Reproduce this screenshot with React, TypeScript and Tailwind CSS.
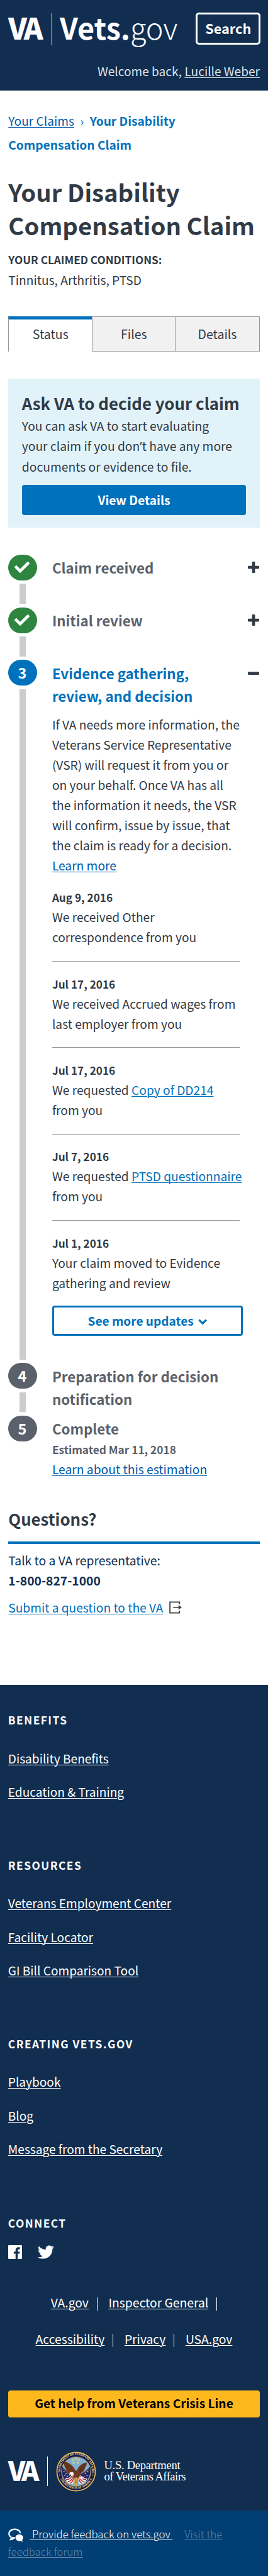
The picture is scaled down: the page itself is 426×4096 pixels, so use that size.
import type { ReactNode } from "react";
import { FaCheck, FaTwitter } from "react-icons/fa";

const link = "underline decoration-1 underline-offset-[2px]";

function Header() {
  return (
    <header className="h-[144px] bg-[#112e51] px-[13px] pt-[17px] text-white">
      <div className="flex h-[70px] items-start">
        <div className="w-[69px] text-[46.7px] font-black leading-[52px] tracking-[-4.3px]">VA</div>
        <div className="mt-[4px] h-[51px] w-px bg-white" />
        <div className="ml-[12px] whitespace-nowrap text-[46.7px] leading-[52px]">
          <span className="font-bold">Vets</span>
          <span className="font-bold">.</span>
          <span className="font-light">gov</span>
        </div>
        <button className="ml-auto mr-[-1px] mt-[3px] h-[51px] w-[102.6px] rounded-[5px] border-[3px] border-white pb-[2px] text-[21.7px] font-bold leading-[40px]">
          Search
        </button>
      </div>
      <p className="mt-[10.4px] text-right text-[19.1px] leading-[32px] text-[#dfe3e8]">
        Welcome back, <a className={link}>Lucille Weber</a>
      </p>
    </header>
  );
}

function Tabs() {
  return (
    <nav className="mt-[42.2px] grid h-[56px] grid-cols-[133px_133px_1fr] text-center text-[19.5px] leading-[40px] text-[#323a45]">
      <div className="border-l border-t-[5px] border-l-[#979797] border-t-[#0071bc] pt-[3px]">Status</div>
      <div className="border border-[#979797] bg-[#f1f1f1] pt-[7px]">Files</div>
      <div className="border border-l-0 border-[#979797] bg-[#f1f1f1] pt-[7px]">Details</div>
    </nav>
  );
}

function AskAlert() {
  return (
    <section className="mt-[42.6px] h-[237px] bg-[#e1f3f8] px-[21.5px] pt-[22.3px] text-[#323a45]">
      <h2 className="whitespace-nowrap text-[25.8px] font-bold leading-[34px]">Ask VA to decide your claim</h2>
      <p className="mt-[2.3px] whitespace-nowrap text-[19.25px] leading-[32px]">
        You can ask VA to start evaluating
        <br />
        your claim if you don<span className="font-['Noto_Sans']">’</span>t have any more
        <br />
        documents or evidence to file.
      </p>
      <button className="mt-[13.4px] h-[48px] w-full rounded-[4px] bg-[#0071bc] text-[19.25px] font-bold leading-[32px] text-white">
        View Details
      </button>
    </section>
  );
}

function PlusIcon() {
  return (
    <svg viewBox="0 0 18 18" className="h-[18px] w-[18px] fill-[#323a45]">
      <rect x="0" y="6.7" width="18" height="4.7" rx="1.3" />
      <rect x="6.7" y="0" width="4.7" height="18" rx="1.3" />
    </svg>
  );
}

function MinusIcon() {
  return (
    <svg viewBox="0 0 18 18" className="h-[18px] w-[18px] fill-[#323a45]">
      <rect x="0" y="7.2" width="18" height="4.7" rx="1.3" />
    </svg>
  );
}

type StepProps = { badge: ReactNode; size: string; circle: string; icon?: ReactNode; last?: boolean; children: ReactNode };

function Step({ badge, size, circle, icon, last, children }: StepProps) {
  return (
    <li className={`flex ${size}`}>
      <div className="flex w-[45.4px] shrink-0 flex-col items-center">
        <div className={`flex h-[41px] w-full shrink-0 items-center justify-center rounded-full pr-px text-[23.5px] font-bold leading-none text-white ${circle}`}>
          {badge}
        </div>
        {!last && <div className="mb-[5.5px] mt-[5.5px] w-[10.6px] flex-1 bg-[#ccc]" />}
      </div>
      <div className="ml-[24.2px] w-[303.4px] shrink-0 whitespace-nowrap pt-[2.6px]">{children}</div>
      {icon && <div className="ml-auto mr-[0.5px] pt-[11.5px]">{icon}</div>}
    </li>
  );
}

function Update({ date, last, children }: { date: string; last?: boolean; children: ReactNode }) {
  return (
    <div className={`w-[298px] pt-[19.5px] ${last ? "" : "border-b border-[#979797] pb-[21.8px]"}`}>
      <h5 className="text-[17.2px] font-bold leading-[31px]">{date}</h5>
      <p className="text-[19.2px] leading-[32px]">{children}</p>
    </div>
  );
}

function Steps() {
  return (
    <ol className="mt-[42.7px] text-[#323a45]">
      <Step badge={<FaCheck className="h-[24px] w-[24px]" />} circle="bg-[#2e8540]" size="h-[83.9px]" icon={<PlusIcon />}>
        <h3 className="text-[22.3px] font-bold leading-[36.4px] text-[#5b616b]">Claim received</h3>
      </Step>
      <Step badge={<FaCheck className="h-[24px] w-[24px]" />} circle="bg-[#2e8540]" size="h-[83.9px]" icon={<PlusIcon />}>
        <h3 className="text-[22.3px] font-bold leading-[36.4px] text-[#5b616b]">Initial review</h3>
      </Step>
      <Step badge="3" circle="bg-[#0071bc]" size="h-[1117.6px]" icon={<MinusIcon />}>
        <h3 className="text-[22.3px] font-bold leading-[36.4px] text-[#0071bc]">
          Evidence gathering,
          <br />
          review, and decision
        </h3>
        <p className="mt-[11px] text-[19.2px] leading-[32px]">
          If VA needs more information, the
          <br />
          Veterans Service Representative
          <br />
          (VSR) will request it from you or
          <br />
          on your behalf. Once VA has all
          <br />
          the information it needs, the VSR
          <br />
          will confirm, issue by issue, that
          <br />
          the claim is ready for a decision.
          <br />
          <a className={`${link} text-[#0059a9]`}>Learn more</a>
        </p>
        <Update date="Aug 9, 2016">
          We received Other
          <br />
          correspondence from you
        </Update>
        <Update date="Jul 17, 2016">
          We received Accrued wages from
          <br />
          last employer from you
        </Update>
        <Update date="Jul 17, 2016">
          We requested <a className={`${link} text-[#0071bc]`}>Copy of DD214</a>
          <br />
          from you
        </Update>
        <Update date="Jul 7, 2016">
          We requested <a className={`${link} text-[#0071bc]`}>PTSD questionnaire</a>
          <br />
          from you
        </Update>
        <Update date="Jul 1, 2016" last>
          Your claim moved to Evidence
          <br />
          gathering and review
        </Update>
        <button className="mt-[20.8px] flex h-[48px] w-full items-center justify-center rounded-[4px] border-[3px] border-[#0071bc] text-[19.1px] font-bold text-[#0071bc]">
          See more updates
          <svg viewBox="0 0 14 10" className="ml-[7.5px] mt-[4px] h-[10px] w-[14.4px]">
            <path d="M1.2 1.6 7 7.3l5.8-5.7" fill="none" stroke="currentColor" strokeWidth="3.2" />
          </svg>
        </button>
      </Step>
      <Step badge="4" circle="bg-[#5b616b]" size="h-[83.8px]">
        <h3 className="text-[22.3px] font-bold leading-[36.4px] text-[#5b616b]">
          Preparation for decision
          <br />
          notification
        </h3>
      </Step>
      <Step badge="5" circle="bg-[#5b616b]" size="h-[100.6px]" last>
        <h3 className="text-[22.3px] font-bold leading-[36.4px] text-[#5b616b]">Complete</h3>
        <h5 className="text-[17.3px] font-bold leading-[29px] text-[#5b616b]">Estimated Mar 11, 2018</h5>
        <a className={`${link} mt-px block text-[19.25px] leading-[32px] text-[#0059a9]`}>Learn about this estimation</a>
      </Step>
    </ol>
  );
}

function Questions() {
  return (
    <section className="mt-[46.5px] text-[19.3px] leading-[32px] text-[#112e51]">
      <h2 className="mb-[10.4px] border-b-[4px] border-[#0071bc] pb-[18.7px] text-[25.8px] font-bold leading-[34px] text-[#323a45]">
        Questions?
      </h2>
      <p>Talk to a VA representative:</p>
      <p className="font-bold">1-800-827-1000</p>
      <p className="mt-[10.6px] flex items-center text-[19.15px]">
        <a className={`${link} text-[#0071bc]`}>Submit a question to the VA</a>
        <svg viewBox="0 0 20 20" className="ml-[10px] h-[20px] w-[20px]">
          <path d="M16.3 5V1.3H1.1v17.4h15.2V15" fill="none" stroke="#3d3a3a" strokeWidth="1.8" />
          <path d="M6.2 9.1h8.6V6l5.1 3.8-5.1 3.8v-3H6.2z" fill="#3d3a3a" />
        </svg>
      </p>
    </section>
  );
}

function FooterGroup({ title, size, links }: { title: string; size: string; links: string[] }) {
  return (
    <section className={size}>
      <h4 className="mb-[32.3px] text-[17.3px] font-bold leading-[24px] tracking-[1.5px]">{title}</h4>
      <ul className="space-y-[21.6px] text-[19.1px] leading-[32px]">
        {links.map((l) => (
          <li key={l}>
            <a className={link}>{l}</a>
          </li>
        ))}
      </ul>
    </section>
  );
}

function LinkRow({ links, trailing }: { links: string[]; trailing?: boolean }) {
  return (
    <div className="flex h-[57.7px] items-center justify-center gap-[17.5px]">
      {links.map((l, i) => (
        <span key={l} className="flex items-center">
          <a className={link}>{l}</a>
          {(trailing || i < links.length - 1) && <span className="ml-[13px] mt-[4px] h-[21px] w-px bg-white" />}
        </span>
      ))}
    </div>
  );
}

function Seal() {
  const stars: [number, number][] = [[47, 17], [40, 20], [54, 20], [42, 27], [52, 27]];
  return (
    <svg viewBox="0 0 96 96" className="h-[64px] w-[64px]">
      <defs>
        <path id="sealTop" d="M12.5 58a37.500 37.500 0 1 1 71 0" />
        <path id="sealBottom" d="M9 62a41.500 41.500 0 0 0 78 0" />
      </defs>
      <circle cx="48" cy="48" r="47.5" fill="#14163a" />
      <circle cx="48" cy="48" r="45.8" fill="#181b4a" stroke="#e3bd52" strokeWidth="2.6" />
      <circle cx="48" cy="48" r="35" fill="#7fb2d1" stroke="#e3bd52" strokeWidth="1" />
      <text className="fill-[#e8d58a] font-serif text-[7.6px] font-bold">
        <textPath href="#sealTop" startOffset="50%" textAnchor="middle">DEPARTMENT OF VETERANS AFFAIRS</textPath>
      </text>
      <text className="fill-[#e8d58a] font-serif text-[7.3px] font-bold">
        <textPath href="#sealBottom" startOffset="50%" textAnchor="middle">UNITED STATES OF AMERICA</textPath>
      </text>
      <circle cx="8.3" cy="56" r="1.3" fill="#e8d58a" />
      <circle cx="87.7" cy="56" r="1.3" fill="#e8d58a" />
      {stars.map(([x, y]) => (
        <path key={`${x}-${y}`} transform={`translate(${x} ${y})`} d="M0-3.200 1-1h2.300L1.500.500 2.200 2.800 0 1.500-2.200 2.800-1.500.500-3.300-1H-1z" fill="#f0d668" />
      ))}
      <path d="M15 36c7 9 14 14 23 18l-5 16-10 1c-6-8-11-20-8-35z" fill="#23275f" />
      <path d="M81 36c-7 9-14 14-23 18l5 16 10 1c6-8 11-20 8-35z" fill="#23275f" />
      <path d="M17 42l14 12M79 42 65 54" stroke="#b9862f" strokeWidth="1.2" />
      <g fill="#e6e8f2">
        {[[19, 48], [24, 53], [21, 57], [28, 59], [25, 64], [76, 48], [71, 53], [74, 58], [67, 60], [70, 65]].map(([x, y]) => (
          <circle key={`${x}-${y}`} cx={x} cy={y} r="1.3" />
        ))}
      </g>
      <path d="M21 64c9 2 14-4 17-10l7 8-5 16c-8 0-15-5-19-14zM75 64c-9 2-14-4-17-10l-7 8 5 16c8 0 15-5 19-14z" fill="#eef0f4" />
      <path d="M24 67c8 1 12-4 15-10M28 72c7 0 10-6 13-12M34 76c5-2 7-8 8-13M72 67c-8 1-12-4-15-10M68 72c-7 0-10-6-13-12M62 76c-5-2-7-8-8-13" fill="none" stroke="#b92b36" strokeWidth="2.2" />
      <path d="M20 24c8 2 19 6 26 20l3 3c3-10 12-19 24-21 1 5-1 10-4 14-1 6-5 9-9 11-2 6-5 11-9 15l-8-2-5-9c-9-2-15-8-14-13-4-5-6-12-4-18z" fill="#6d3b22" />
      <path d="M22 28c8 4 14 9 18 18M24 36c6 3 10 7 13 12M71 29c-7 4-12 10-15 18M68 38c-5 3-8 7-10 12" fill="none" stroke="#3e2013" strokeWidth="1.2" />
      <path d="M32 52c2-4 6-4 9-2l2 7-6 1-2-2-3 1z" fill="#f7f5ef" />
      <path d="M32 53l4 1-3 2z" fill="#e3ae35" />
      <path d="M44 63l5-1 4 2-1 14-4 4-4-4z" fill="#d9a93a" />
      <path d="M46 64v13M50 65v12" stroke="#b92b36" strokeWidth="1" />
      <path d="M54 63c5-4 10-3 13-1l-6 4z" fill="#f3f3ee" />
    </svg>
  );
}

function FeedbackBar() {
  return (
    <div className="flex-1 bg-[#003e73] px-[12.8px] pt-[22.7px] text-[16.8px] font-light leading-[28px]">
      <div className="flex items-start">
        <svg viewBox="0 0 36 34" className="mt-[5px] h-[22.6px] w-[24px]" preserveAspectRatio="none">
          <path
            fillRule="evenodd"
            d="M15.500.800C7 .800.300 6 .300 13c0 4 2.200 7.400 5.700 9.600-.4 2.600-1.800 4.500-3.800 6.400 4.300.6 8.500-.9 11.600-3.900l2.600-.1.300-3.700c-2 .2-4.500 0-6.300-.5l-2.400 1.800c.1-1 .2-2 0-2.900C5 18 3.600 15.700 3.600 13c0-4.900 5.300-8.600 11.900-8.600 6 0 11 3 11.800 7.400l3.500.7C30.500 5.800 23.800.800 15.500.800z"
            fill="#fff"
          />
          <path d="M26.500 14.500c-5.200 0-9.200 3.600-9.200 8.200s4 8.200 9.200 8.200c.9 0 1.800-.1 2.600-.3 1.800 1.300 3.700 1.800 6 1.700-1-1.200-1.600-2.500-1.800-4 1.500-1.400 2.400-3.400 2.400-5.600 0-4.600-4-8.200-9.200-8.200z" fill="#fff" />
        </svg>
        <a className={`${link} ml-[10.5px] whitespace-pre`}>{"\u00a0Provide feedback on vets.gov\u00a0"}</a>
        <a className={`${link} ml-[19px] whitespace-nowrap text-[#5f87ab]`}>Visit the</a>
      </div>
      <a className={`${link} text-[#5f87ab]`}>feedback forum</a>
    </div>
  );
}

function Footer() {
  return (
    <footer className="flex h-[1417.3px] flex-col bg-[#112e51] text-white">
      <div className="h-[1313.4px] shrink-0 px-[12.8px] pt-[44.8px]">
        <FooterGroup title="BENEFITS" size="h-[230.4px]" links={["Disability Benefits", "Education & Training"]} />
        <FooterGroup title="RESOURCES" size="h-[283.8px]" links={["Veterans Employment Center", "Facility Locator", "GI Bill Comparison Tool"]} />
        <FooterGroup title="CREATING VETS.GOV" size="h-[285.2px]" links={["Playbook", "Blog", "Message from the Secretary"]} />
        <h4 className="text-[17.3px] font-bold leading-[24px] tracking-[1.5px]">CONNECT</h4>
        <div className="mt-[21.9px] flex h-[24px] items-center">
          <svg viewBox="0 0 24 24" className="ml-[0.7px] h-[22px] w-[22px] fill-white">
            <path d="M22.676 0H1.324C.593 0 0 .593 0 1.324v21.352C0 23.408.593 24 1.324 24h11.494v-9.294H9.689v-3.621h3.129V8.410c0-3.099 1.894-4.785 4.659-4.785 1.325 0 2.464.097 2.796.141v3.240h-1.921c-1.500 0-1.792.721-1.792 1.771v2.311h3.584l-.465 3.630H16.560V24h6.115c.733 0 1.325-.592 1.325-1.324V1.324C24 .593 23.408 0 22.676 0" />
          </svg>
          <FaTwitter className="ml-[24.5px] h-[26px] w-[26px]" />
        </div>
        <div className="mt-[40.3px] text-[19.3px]">
          <LinkRow links={["VA.gov", "Inspector General"]} trailing />
          <LinkRow links={["Accessibility", "Privacy", "USA.gov"]} />
        </div>
        <button className="mt-[52.9px] h-[43px] w-full rounded-[4px] border-b border-[#d69b1c] bg-[#fdb81e] pb-[2px] text-[19.15px] font-bold leading-[38px] text-black">
          Get help from Veterans Crisis Line
        </button>
        <div className="mt-[54px] flex h-[64px] items-start">
          <div className="mt-[5.6px] w-[62.2px] text-[43px] font-black leading-[44px] tracking-[-5.4px]">VA</div>
          <div className="mt-[8px] h-[47px] w-px bg-white" />
          <div className="ml-[13px]">
            <Seal />
          </div>
          <div className="ml-[12.5px] mt-[13px] whitespace-nowrap font-['Liberation_Serif',serif] text-[18.5px] leading-[18px]">
            <div className="tracking-[-0.27px]">U.S. Department</div>
            <div className="tracking-[-0.5px]">of Veterans Affairs</div>
          </div>
        </div>
      </div>
      <FeedbackBar />
    </footer>
  );
}

export default function App() {
  return (
    <div className="h-[4096px] w-[426px] overflow-hidden bg-white font-['Noto_Sans_CJK_SC','Noto_Sans',sans-serif]">
      <Header />
      <main className="h-[2534.7px] px-[13.3px] pt-[29px]">
        <p className="whitespace-nowrap text-[19.15px] leading-[38.4px]">
          <a className={`${link} text-[#0059a9]`}>Your Claims</a>
          <span className="px-[9.5px] text-[#0071bc]">›</span>
          <span className="font-bold text-[#0071bc]">
            Your Disability
            <br />
            Compensation Claim
          </span>
        </p>
        <h1 className="mt-[28.3px] whitespace-nowrap text-[38.3px] font-bold leading-[53.2px] text-[#323a45]">
          Your Disability
          <br />
          Compensation Claim
        </h1>
        <h6 className="mt-[12.7px] text-[17.2px] font-bold leading-[32px] text-[#323a45]">YOUR CLAIMED CONDITIONS:</h6>
        <p className="text-[19.2px] leading-[32px] text-[#323a45]">Tinnitus, Arthritis, PTSD</p>
        <Tabs />
        <AskAlert />
        <Steps />
        <Questions />
      </main>
      <Footer />
    </div>
  );
}
